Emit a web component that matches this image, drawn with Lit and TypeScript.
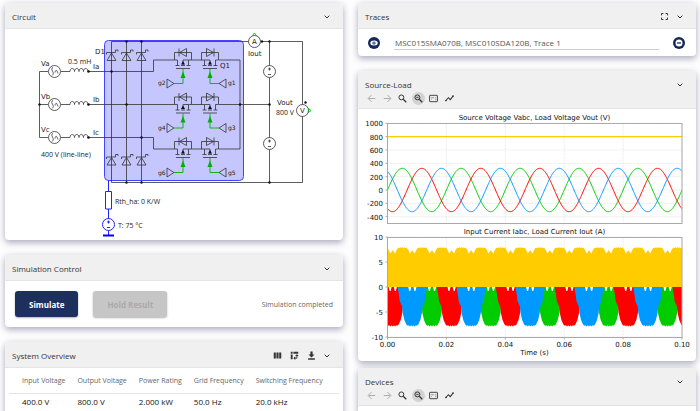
import { LitElement, html, css, svg, type TemplateResult } from "lit";
import { customElement, property } from "lit/decorators.js";

const chevron = html`<svg viewBox="0 0 24 24" class="ic"><path d="M5 8l7 7 7-7" fill="none" stroke="currentColor" stroke-width="3"/></svg>`;
const arrowLeft = html`<svg viewBox="0 0 24 24" class="ic"><path d="M22 12H4M12 3l-9 9 9 9" fill="none" stroke="currentColor" stroke-width="2.6"/></svg>`;
const arrowRight = html`<svg viewBox="0 0 24 24" class="ic"><path d="M2 12h18M12 3l9 9-9 9" fill="none" stroke="currentColor" stroke-width="2.6"/></svg>`;
const search = html`<svg viewBox="0 0 24 24" class="ic"><path d="M14 14l8 8" stroke="currentColor" stroke-width="3.4"/><circle cx="9" cy="9" r="6.5" fill="none" stroke="currentColor" stroke-width="2.6"/></svg>`;
const zoomOut = html`<svg viewBox="0 0 24 24" class="ic"><path d="M14 14l8 8" stroke="currentColor" stroke-width="3.4"/><circle cx="9" cy="9" r="6.5" fill="none" stroke="currentColor" stroke-width="2.6"/><path d="M6 9h6" stroke="currentColor" stroke-width="2.4"/></svg>`;
const aspect = html`<svg viewBox="0 0 24 24" class="ic"><rect x="1.5" y="3.5" width="21" height="17" rx="1.5" fill="none" stroke="currentColor" stroke-width="2.4"/><path d="M5 10h9M16 10h3M18 13v4M6 15h2" stroke="currentColor" stroke-width="1.2"/></svg>`;
const trend = html`<svg viewBox="0 0 24 24" class="ic"><path d="M2 18l7-8 5 5 8-10" fill="none" stroke="currentColor" stroke-width="2.8"/><circle cx="2.5" cy="17.5" r="2.2" fill="currentColor"/><circle cx="21.5" cy="5.5" r="2.2" fill="currentColor"/></svg>`;
const expand = html`<svg viewBox="0 0 24 24" class="ic"><path d="M4 9V4h5M15 4h5v5M20 15v5h-5M9 20H4v-5" fill="none" stroke="currentColor" stroke-width="2.6"/></svg>`;
const columns = html`<svg viewBox="0 0 24 24" class="ic"><path d="M2 4h5.5v16H2zM9.2 4h5.6v16H9.2zM16.5 4H22v16h-5.5z" fill="currentColor"/></svg>`;
const pivot = html`<svg viewBox="0 0 24 24" class="ic"><path d="M2 2h5v5H2zM9 2h13v5H9zM2 9h5v13H2z" fill="currentColor"/><path d="M12 19h6.5V11" fill="none" stroke="currentColor" stroke-width="2.5"/><path d="M14 14l-5 5 5 5zM13.5 13.5l5-5 5 5z" fill="currentColor"/></svg>`;
const download = html`<svg viewBox="0 0 24 24" class="ic"><path d="M9 1h6v8h5l-8 8-8-8h5zM3 19.5h18V23H3z" fill="currentColor"/></svg>`;
const eye = html`<svg viewBox="0 0 24 24" class="ic"><circle cx="12" cy="12" r="12" fill="#14285a"/><ellipse cx="12" cy="12" rx="7.5" ry="5" fill="#fff"/><circle cx="12" cy="12" r="3.2" fill="#14285a"/><circle cx="12" cy="12" r="1.4" fill="#fff"/></svg>`;
const minus = html`<svg viewBox="0 0 24 24" class="ic"><circle cx="12" cy="12" r="12" fill="#14285a"/><circle cx="12" cy="12" r="7" fill="#fff"/><path d="M8 12h8" stroke="#14285a" stroke-width="2.5"/></svg>`;

@customElement("panel-card")
class PanelCard extends LitElement {
  @property() heading = "";

  static styles = css`
    :host { display: block; background: #fff; border-radius: 4px; box-shadow: 0 3px 6px rgba(30, 30, 80, 0.3), 0 0 8px rgba(30, 30, 80, 0.08); }
    .head { background: #f0f0f0; border-radius: 4px 4px 0 0; border-bottom: 1px solid #e4e4e4; padding: 0 12px 0 7px; }
    .row { display: flex; align-items: center; gap: 7px; box-sizing: border-box; height: 25px; padding-top: 2px; }
    .title { flex: 1; margin: 0; font-size: 8px; line-height: 10px; font-weight: 400; color: #333; }
    ::slotted([slot="actions"]) { display: flex; gap: 8px; }
    .toggle { all: unset; display: flex; width: 8px; height: 8px; color: #333; cursor: pointer; }
    .ic { width: 100%; height: 100%; display: block; }
  `;

  render() {
    return html`
      <header class="head">
        <div class="row">
          <h2 class="title">${this.heading}</h2>
          <slot name="actions"></slot>
          <button class="toggle" aria-label="Collapse ${this.heading}">${chevron}</button>
        </div>
        <slot name="tools"></slot>
      </header>
      <slot></slot>
    `;
  }
}

@customElement("plot-tools")
class PlotTools extends LitElement {
  static styles = css`
    :host { display: flex; justify-content: space-between; width: 91px; height: 13px; margin-top: -4px; padding-bottom: 3px; }
    .tool { all: unset; box-sizing: border-box; width: 13px; height: 13px; padding: 2px; border-radius: 50%; color: #333; cursor: pointer; }
    .off { color: #aaa; }
    .on { background: #d2d2d2; }
    .ic { width: 100%; height: 100%; display: block; }
  `;

  render() {
    return html`
      <button class="tool off" aria-label="Back" disabled>${arrowLeft}</button>
      <button class="tool off" aria-label="Forward" disabled>${arrowRight}</button>
      <button class="tool" aria-label="Zoom in">${search}</button>
      <button class="tool on" aria-label="Zoom out">${zoomOut}</button>
      <button class="tool" aria-label="Fit">${aspect}</button>
      <button class="tool" aria-label="Cursor">${trend}</button>
    `;
  }
}

const GREEN = "#0c0";
const RED = "#f00";
const BLUE = "#09f";
const GOLD = "#fc0";

@customElement("circuit-diagram")
class CircuitDiagram extends LitElement {
  static styles = css`
    :host { display: block; }
    svg { display: block; width: 100%; height: auto; }
    .w { fill: none; stroke: #333; stroke-width: 0.8; }
    .t { fill: #fff; stroke: #333; stroke-width: 0.8; }
    .n { fill: #111; }
    .g { fill: none; stroke: #00b000; stroke-width: 0.9; }
    .ga { fill: #00b000; }
    .h { fill: #fff; stroke: #22f; stroke-width: 1; }
    text { font: 7px "Open Sans", "Noto Sans", sans-serif; fill: #222; }
    .s { font-family: "DejaVu Sans", sans-serif; }
    .gate { font-size: 6px; }
  `;

  diode(x: number, y: number) {
    return svg`<path class="w" d="M${x - 4.5} ${y + 4.5}h9l-4.5-7.5z M${x - 5} ${y - 1.5}v-2h9v-2.5h2.5v1.5"/>`;
  }

  /* A MOSFET with its body diode; dir is -1 where the diode points left. */
  mosfet(x: number, y: number, dir: number) {
    return svg`
      <path class="w" d="M${x - 8.5} ${y}v-7.5h17v7.5M${x - 8.5} ${y}h3v5.5M${x + 8.5} ${y}h-3v5.5M${x - 7.5} ${y + 5.5}h4M${x - 2} ${y + 5.5}h4M${x + 3.5} ${y + 5.5}h4M${x - 7} ${y + 8.5}h14M${x} ${y}v5"/>
      <path class="w" d="M${x - dir * 3.5} ${y - 11.5}v8l${dir * 7}-4zM${x + dir * 4} ${y - 11.5}v8"/>
      <path class="w" d="M${x} ${y}h${dir * -5.5}"/>
      <path class="n" d="M${x - 2} ${y + 4.5}h4l-2-3.5z"/>
      <path class="g" d="M${x} ${y + 9}v14.5h${dir * 9}"/>
      <path class="ga" d="M${x - 2.5} ${y + 18}h5l-2.5-6.5z"/>
      <path class="w" d="M${x + dir * 16} ${y + 19}v9l${dir * -7}-4.5z"/>`;
  }

  source(y: number) {
    return svg`<circle class="t" cx="54.5" cy=${y} r="6"/>
      <path class="w" d="M53 ${y - 4}c-4 2 3 5-1 8M55 ${y + 1}c1-4 2-2 3 1"/>
      <path class="w" d="M61 ${y}h9c0-4 4.5-4 4.5 0c0-4 4.5-4 4.5 0c0-4 4.5-4 4.5 0c0-4 4.5-4 4.5 0"/>
      <circle class="n" cx="88.5" cy=${y} r="1.3"/>`;
  }

  dc(y: number) {
    return svg`<circle class="t" cx="269.5" cy=${y} r="6"/>
      <path class="w" d="M268 ${y - 2.5}h3M269.5 ${y - 4}v3M268 ${y + 3}h3"/>`;
  }

  render() {
    return html`
      <svg viewBox="5 29 338 211" role="img" aria-label="Three-phase rectifier circuit">
        <rect x="104.5" y="40.5" width="139" height="140" rx="4" fill="#c6c6ff" stroke="#44f"/>
        <path class="w" d="M111.5 41.5H302.5V182.5H111.5zM126.5 41.5v141M141.5 41.5v141M269.5 41.5v141
          M48 71.5H39.5V137.5H48M39.5 104.5H48
          M88.5 71.5H153.5V60H174.5M88.5 104.5H174.5M88.5 137.5H153.5V149H174.5
          M191.5 60H202M191.5 104.5H202M191.5 149H202M219 60H240V149H219M219 104.5H269.5"/>
        ${[111.5, 126.5, 141.5].map((x) => [this.diode(x, 56), this.diode(x, 160.5)])}
        ${[60, 104.5, 149].map((y) => [this.mosfet(183, y, -1), this.mosfet(210, y, 1)])}
        ${[71.5, 104.5, 137.5].map((y) => this.source(y))}
        ${[71.5, 143.5].map((y) => this.dc(y))}
        ${[
          [39.5, 104.5], [111.5, 71.5], [126.5, 104.5], [141.5, 137.5], [126.5, 41.5], [141.5, 41.5],
          [126.5, 182.5], [141.5, 182.5], [240, 104.5], [269.5, 104.5], [269.5, 41.5], [269.5, 182.5], [262, 41.5], [305.5, 102.5],
        ].map(([x, y]) => svg`<circle class="n" cx=${x} cy=${y} r="1.2"/>`)}
        <circle class="t" cx="254.5" cy="41.5" r="6"/>
        <circle class="t" cx="302.5" cy="110.5" r="6"/>
        <path class="g" d="M252.5 35.5l2-2.5 2 2.5M308.5 108.5l2.5 2-2.5 2z"/>
        <path class="h" d="M108.5 180.5V191.5M108.5 209V219M108.5 230v5M105.5 191.5h6v17.5h-6z"/>
        <circle class="h" cx="108.5" cy="224.5" r="6"/>
        <path class="h" d="M107 222h3M108.5 220.5v3M107 227.5h3"/>
        <path d="M103 234.5h11v2h-11z" fill="#00f"/>
        <text class="s" x="41" y="66">Va</text>
        <text class="s" x="41" y="99">Vb</text>
        <text class="s" x="41" y="132">Vc</text>
        <text x="68" y="64">0.5 mH</text>
        <text class="s" x="93" y="69">Ia</text>
        <text class="s" x="93" y="102">Ib</text>
        <text class="s" x="93" y="135">Ic</text>
        <text class="s" x="95" y="54">D1</text>
        <text class="s" x="220" y="68">Q1</text>
        <text x="41" y="157">400 V (line-line)</text>
        <text x="115" y="204">Rth_ha: 0 K/W</text>
        <text x="118" y="228">T: 75 °C</text>
        <text class="s" x="248" y="56">Iout</text>
        <text class="s" x="277" y="105">Vout</text>
        <text x="276" y="115">800 V</text>
        <text class="s" x="254.5" y="44" text-anchor="middle">A</text>
        <text class="s" x="302.5" y="113" text-anchor="middle">V</text>
        ${[["g2", "g1", 85], ["g4", "g3", 130], ["g6", "g5", 175]].map(
          ([a, b, y]) => svg`<text class="s gate" x="158" y=${y}>${a}</text><text class="s gate" x="228" y=${y}>${b}</text>`
        )}
      </svg>
    `;
  }
}

const X0 = 387.5;
const W = 294.5;
const PERIOD = W / 5;

@customElement("scope-plot")
class ScopePlot extends LitElement {
  static styles = css`
    :host { display: block; }
    svg { display: block; width: 100%; height: auto; }
    text { font: 7px "DejaVu Sans", sans-serif; fill: #111; }
    .end { text-anchor: end; }
    .mid { text-anchor: middle; }
    .grid { stroke: #ddd; stroke-width: 0.6; stroke-dasharray: 2 1; }
    .frame { fill: none; stroke: #aaa; }
    .curve { fill: none; stroke-width: 1; }
  `;

  sine(phase: number, color: string) {
    const points: string[] = [];
    for (let i = 0; i <= 589; i++) {
      const x = i / 2;
      const y = 190 - 21.7 * Math.sin((2 * Math.PI * x) / PERIOD + phase);
      points.push(`${(X0 + x).toFixed(1)},${y.toFixed(2)}`);
    }
    return svg`<polyline class="curve" stroke=${color} points=${points.join(" ")}/>`;
  }

  /* One negative current envelope, centred on c. */
  lobe(c: number, color: string) {
    const half = [[14.7, 0], [13.5, 7], [12.6, 14], [11.2, 17.5], [10.3, 19], [9.6, 26], [8, 33], [6, 37.5], [4.5, 38.8], [3.5, 38.2], [2.4, 39.4], [1.2, 38.2]];
    const left = half.map(([x, y]) => `${c - x},${287 + y}`);
    const right = half.map(([x, y]) => `${c + x},${287 + y}`).reverse();
    return svg`<polygon fill=${color} points=${[...left, `${c},326.4`, ...right].join(" ")}/>`;
  }

  lobes(first: number, color: string) {
    return [-1, 0, 1, 2, 3, 4, 5].map((k) => this.lobe(X0 + first + k * PERIOD, color));
  }

  gold() {
    const step = PERIOD / 3;
    const shape = [[0, 250], [1.2, 252], [2.6, 253.6], [3.4, 251], [4.6, 249], [5.6, 247.8], [7, 248], [8, 247.2], [9, 248], [9.8, 247.2], [10.8, 248], [11.7, 247.2], [12.7, 248], [14, 247.8], [15, 249], [16.2, 251], [17, 253.6], [18.4, 252]];
    const points: string[] = [`${X0},287`];
    for (let k = -1; k < 16; k++) {
      for (const [dx, y] of shape) {
        const x = 5.2 + k * step + dx;
        if (x >= 0 && x <= W) points.push(`${(X0 + x).toFixed(1)},${y}`);
      }
    }
    points.push(`${X0 + W},249`, `${X0 + W},287`);
    return svg`<polygon fill=${GOLD} points=${points.join(" ")}/>`;
  }

  notches() {
    const out: TemplateResult[] = [];
    for (let k = 0; k < 15; k++) {
      for (const d of [-2.6, 2.6]) {
        const x = X0 + 5.2 + (k * PERIOD) / 3 + d;
        out.push(svg`<path fill="#fff" d="M${x - 1.5} 287h3l-1 4h-1z"/>`);
      }
    }
    return out;
  }

  render() {
    const gx = [0, 1, 2, 3, 4, 5].map((k) => X0 + k * PERIOD);
    const upper = [1000, 800, 600, 400, 200, 0, -200, -400];
    const lower = [10, 5, 0, -5, -10];
    const yu = (v: number) => 190 - v / 15;
    const yl = (v: number) => 287 - v * 5;
    return html`
      <svg viewBox="358 109 338 252" role="img" aria-label="Source and load waveforms">
        <defs><clipPath id="area"><rect x=${X0} y="123" width=${W} height="215"/></clipPath></defs>
        <text class="mid" x="534.5" y="120">Source Voltage Vabc, Load Voltage Vout (V)</text>
        <text class="mid" x="534.5" y="234">Input Current Iabc, Load Current Iout (A)</text>
        ${gx.map((x) => svg`<path class="grid" d="M${x} 123.5v100M${x} 237.5v100"/><path class="frame" d="M${x} 337.5v2"/>`)}
        ${upper.map((v) => svg`<path class="grid" d="M${X0} ${yu(v)}h${W}"/><path class="frame" d="M${X0 - 2} ${yu(v)}h2"/><text class="end" x="383" y=${yu(v) + 3}>${v}</text>`)}
        ${lower.map((v) => svg`<path class="grid" d="M${X0} ${yl(v)}h${W}"/><path class="frame" d="M${X0 - 2} ${yl(v)}h2"/><text class="end" x="383" y=${yl(v) + 3}>${v}</text>`)}
        <g clip-path="url(#area)">
          ${this.sine(0, GREEN)}
          ${this.sine((-2 * Math.PI) / 3, RED)}
          ${this.sine((2 * Math.PI) / 3, BLUE)}
          <path d="M${X0} 136.7h${W}" stroke=${GOLD} stroke-width="1.3"/>
          ${this.lobes(5.2 + (2 * PERIOD) / 3, GREEN)}
          ${this.lobes(5.2, RED)}
          ${this.lobes(5.2 + PERIOD / 3, BLUE)}
          ${this.notches()}
          ${this.gold()}
        </g>
        <rect class="frame" x=${X0} y="123.5" width=${W} height="100"/>
        <rect class="frame" x=${X0} y="237.5" width=${W} height="100"/>
        ${gx.map((x, i) => svg`<text class="mid" x=${x} y="347">${(i * 0.02).toFixed(2)}</text>`)}
        <text class="mid" x="534.5" y="355">Time (s)</text>
      </svg>
    `;
  }
}

@customElement("app-root")
class AppRoot extends LitElement {
  static styles = css`
    :host { display: block; height: 100vh; overflow: hidden; background: #fdfdfe; font-family: "Open Sans", "Noto Sans", sans-serif; color: #222; }
    .page { display: grid; grid-template-columns: 1fr 1fr; gap: 15px; padding: 3px 4px 0 5px; }
    .col { display: flex; flex-direction: column; gap: 15px; min-width: 0; }
    .plots { display: flex; flex-direction: column; gap: 7px; }
    .ic { width: 100%; height: 100%; display: block; }
    .act { all: unset; display: block; width: 9px; height: 9px; color: #333; cursor: pointer; }
    .control { display: flex; align-items: center; gap: 15px; padding: 10px; height: 26px; }
    .btn { border: 0; border-radius: 3px; height: 26px; padding: 0 14px; font: 700 8px "Open Sans", sans-serif; box-shadow: 0 1px 2px rgba(0, 0, 0, 0.3); }
    .primary { background: #1d2f5d; color: #fff; }
    .muted { background: #c6c6c6; color: #aaa; }
    .status { margin-left: auto; font-size: 7px; color: #666; }
    .overview { padding: 0 4px 14px; }
    .data { border-collapse: collapse; width: 100%; text-align: left; }
    .data th, .data td { padding: 0 12px 0 0; white-space: nowrap; line-height: 10px; }
    .data th { height: 25px; font-size: 7px; font-weight: 400; color: #666; border-bottom: 1px solid #e4e4e4; }
    .data td { height: 15px; font-size: 8px; color: #111; }
    .data th:first-child, .data td:first-child { padding-left: 13px; }
    .data th:last-child, .data td:last-child { width: 100%; padding-right: 0; }
    .trace { display: flex; align-items: center; gap: 14px; padding: 0 11px 0 10px; height: 27px; }
    .round { all: unset; width: 12px; height: 12px; cursor: pointer; }
    .name { flex: 1; min-width: 0; box-sizing: border-box; height: 15px; border: 0; border-bottom: 1px solid #ccc; padding: 0 1px; background: none; font: 8px "Open Sans", sans-serif; color: #555; outline: 0; }
    .empty { height: 60px; }
  `;

  render() {
    const cols = ["Input Voltage", "Output Voltage", "Power Rating", "Grid Frequency", "Switching Frequency"];
    const vals = ["400.0 V", "800.0 V", "2.000 kW", "50.0 Hz", "20.0 kHz"];
    return html`
      <main class="page">
        <div class="col">
          <panel-card heading="Circuit"><circuit-diagram></circuit-diagram></panel-card>
          <panel-card heading="Simulation Control">
            <div class="control">
              <button class="btn primary">Simulate</button>
              <button class="btn muted" disabled>Hold Result</button>
              <span class="status" role="status">Simulation completed</span>
            </div>
          </panel-card>
          <panel-card heading="System Overview">
            <div slot="actions">
              <button class="act" aria-label="Columns">${columns}</button>
              <button class="act" aria-label="Transpose">${pivot}</button>
              <button class="act" aria-label="Download">${download}</button>
            </div>
            <div class="overview">
              <table class="data">
                <thead><tr>${cols.map((c) => html`<th scope="col">${c}</th>`)}</tr></thead>
                <tbody><tr>${vals.map((v) => html`<td>${v}</td>`)}</tr></tbody>
              </table>
            </div>
          </panel-card>
        </div>
        <div class="col">
          <panel-card heading="Traces">
            <div slot="actions"><button class="act" aria-label="Full screen">${expand}</button></div>
            <div class="trace">
              <button class="round" aria-label="Show trace">${eye}</button>
              <input class="name" aria-label="Trace name" value="MSC015SMA070B, MSC010SDA120B, Trace 1">
              <button class="round" aria-label="Remove trace">${minus}</button>
            </div>
          </panel-card>
          <div class="plots">
            <panel-card heading="Source-Load"><plot-tools slot="tools"></plot-tools><scope-plot></scope-plot></panel-card>
            <panel-card heading="Devices"><plot-tools slot="tools"></plot-tools><div class="empty"></div></panel-card>
          </div>
        </div>
      </main>
    `;
  }
}
